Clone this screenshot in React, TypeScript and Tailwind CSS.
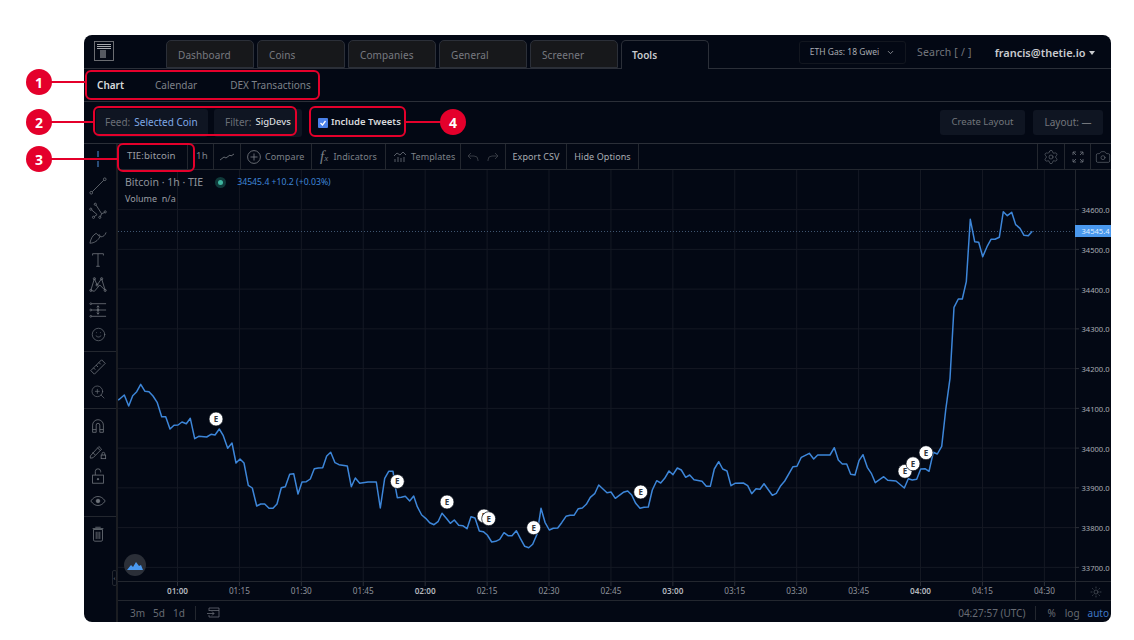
import type { ReactNode } from "react";
import { Camera, ChevronDown, Settings, Smile, Sun, ZoomIn } from "lucide-react";

const tabs = ["Dashboard", "Coins", "Companies", "General", "Screener", "Tools"];

// traced in groups: [origin x, origin y, points at 3x]
const traced: [number, number, number[][]][] = [
  [118, 370, [[0, 90], [5, 87], [19, 75], [32, 108], [44, 77], [56, 65], [68, 43], [81, 64], [93, 65], [105, 78], [118, 98], [131, 140], [143, 140], [156, 177], [168, 166], [180, 165], [192, 156], [205, 161], [217, 145], [230, 206], [242, 199], [266, 201], [279, 193], [291, 195], [304, 177], [316, 197], [329, 235], [342, 219], [354, 279], [366, 267], [378, 279], [391, 346], [403, 354], [416, 408], [428, 402], [440, 402], [453, 415], [465, 415], [477, 402], [490, 353], [502, 350], [515, 313], [527, 311], [540, 372], [552, 336], [565, 335], [577, 327], [589, 296], [601, 294], [614, 293], [626, 258], [638, 247], [651, 278], [663, 284], [688, 288], [700, 350], [712, 324], [725, 340], [750, 336], [775, 336], [787, 414], [800, 325], [812, 304], [825, 304], [832, 350], [838, 383], [850, 382], [862, 379], [875, 393], [887, 378]]],
  [390, 440, [[82, 200], [95, 225], [107, 235], [119, 248], [132, 254], [144, 245], [156, 220], [169, 235], [181, 250], [193, 240], [206, 256], [218, 257], [231, 266], [243, 230], [255, 234], [268, 273], [280, 275], [292, 285], [305, 306], [317, 304], [329, 298], [342, 278], [354, 287], [366, 287], [379, 272], [391, 295], [404, 319], [416, 323], [428, 313], [441, 283], [453, 205], [465, 247], [478, 270], [490, 265], [503, 264], [515, 248], [528, 229], [540, 226], [552, 226], [565, 206], [577, 204], [589, 193], [601, 172], [614, 161], [626, 135], [651, 158], [663, 156], [676, 175], [700, 157], [713, 153], [725, 165], [737, 190], [750, 205], [762, 202], [775, 201], [787, 150], [800, 122], [812, 129], [824, 115], [837, 93], [849, 104], [862, 84], [874, 90], [887, 112]]],
  [680, 420, [[29, 165], [42, 179], [66, 184], [79, 199], [91, 199], [103, 147], [116, 125], [128, 147], [141, 153], [153, 197], [165, 190], [190, 189], [203, 197], [215, 221], [228, 206], [240, 208], [252, 191], [277, 226], [289, 220], [302, 197], [314, 183], [339, 140], [351, 139], [364, 112], [388, 100], [401, 117], [413, 105], [450, 105], [463, 83], [475, 120], [487, 132], [500, 132], [512, 163], [525, 165], [537, 122], [549, 104], [562, 142], [574, 160], [586, 188], [611, 170], [623, 181], [648, 183], [673, 204], [685, 176], [697, 180], [710, 178], [722, 147], [735, 146], [747, 154]]],
  [920, 190, [[28, 840], [40, 787], [52, 792], [65, 769], [77, 660], [90, 565], [102, 352], [115, 327], [127, 327], [139, 275], [151, 88], [164, 155], [176, 157], [188, 200], [201, 170], [213, 148], [225, 148], [238, 142], [250, 65], [262, 77], [275, 67], [287, 104], [300, 115], [312, 136], [325, 137], [337, 124]]],
];

const linePoints = traced
  .flatMap(([ox, oy, pts]) => pts.map(([x, y]) => `${(ox + x / 3).toFixed(1)},${(oy + y / 3).toFixed(1)}`))
  .join(" ");

const prices = ["34600.0", "34500.0", "34400.0", "34300.0", "34200.0", "34100.0", "34000.0", "33900.0", "33800.0", "33700.0"];
const times = ["01:00", "01:15", "01:30", "01:45", "02:00", "02:15", "02:30", "02:45", "03:00", "03:15", "03:30", "03:45", "04:00", "04:15", "04:30"];
const markers = [[216, 419], [397.3, 481.5], [447, 502], [484, 516], [488.7, 518.7], [533.7, 527.7], [640.7, 492], [905, 471.3], [913, 463.8], [926, 452.7]];

function Chart() {
  return (
    <svg viewBox="118 170 993 430" className="block h-[430px] w-[993px] shrink-0" fontFamily="'Noto Sans', sans-serif">
      {prices.map((_, i) => (
        <line key={i} x1="118" x2="1075" y1={209.6 + i * 39.75} y2={209.6 + i * 39.75} stroke="#151924" />
      ))}
      {times.map((_, i) => (
        <line key={i} x1={177.5 + i * 61.92} x2={177.5 + i * 61.92} y1="170" y2="582" stroke="#151924" />
      ))}
      <line x1="118" x2="1075" y1="231.5" y2="231.5" stroke="#3f5570" strokeDasharray="1 2" />
      <polyline points={linePoints} fill="none" stroke="#3d86d9" strokeWidth="1.5" strokeLinejoin="round" />
      {markers.map(([x, y], i) => (
        <g key={i}>
          <circle cx={x} cy={y} r="7" fill="#ffffff" stroke="#030814" strokeWidth="0.7" />
          <text x={x} y={y + 2.8} textAnchor="middle" fontSize="8" fontWeight="700" fill="#30343c">E</text>
        </g>
      ))}
      <line x1="1075.5" x2="1075.5" y1="170" y2="600" stroke="#23272f" />
      <line x1="118" x2="1111" y1="581.5" y2="581.5" stroke="#23272f" />
      {prices.map((p, i) => (
        <g key={p}>
          <line x1="1075" x2="1079" y1={209.6 + i * 39.75} y2={209.6 + i * 39.75} stroke="#2b2f38" />
          <text x="1081.5" y={213.2 + i * 39.75} fontSize="7.6" fill="#a7abb2">{p}</text>
        </g>
      ))}
      <rect x="1075" y="225" width="36" height="12" fill="#4a98ee" />
      <text x="1081.5" y="234" fontSize="7.6" fill="#dcecff">34545.4</text>
      {times.map((t, i) => (
        <g key={t}>
          <line x1={177.5 + i * 61.92} x2={177.5 + i * 61.92} y1="582" y2="586" stroke="#2b2f38" />
          <text
            x={177.5 + i * 61.92}
            y="594"
            textAnchor="middle"
            fontSize="8.2"
            fontWeight={t.endsWith(":00") ? 600 : 400}
            fill={t.endsWith(":00") ? "#b3b6bc" : "#8f939b"}
          >
            {t}
          </text>
        </g>
      ))}
    </svg>
  );
}

function Logo() {
  return (
    <svg viewBox="0 0 20 20" className="h-5 w-5" fill="none">
      <rect x="0.5" y="0.5" width="19" height="19" stroke="#77797d" strokeWidth="0.9" />
      <path d="M3 3.500h14M3 5.500h14M3 7.500h14" stroke="#a8aaae" strokeWidth="1.1" />
      <path d="M6 10h6M6 12h6M6 14h6M6 16h6" stroke="#a8aaae" strokeWidth="1" />
    </svg>
  );
}

function RailIcon({ children }: { children: ReactNode }) {
  return (
    <svg viewBox="0 0 20 20" className="h-[18px] w-[18px]" fill="none" stroke="#6f747c" strokeWidth="0.9">
      {children}
    </svg>
  );
}

function RailSlot({ className, children }: { className: string; children: ReactNode }) {
  return <div className={`flex items-center justify-center ${className}`}>{children}</div>;
}

function LeftRail() {
  return (
    <div className="flex w-[34px] shrink-0 flex-col border-r-2 border-[#1b1d22]">
      <div className="flex flex-col border-b border-[#23272f] pr-[4px] pb-[5px]">
        <RailSlot className="h-[29px]">
          <svg viewBox="0 0 20 20" className="h-5 w-5" fill="none" stroke="#4f8fdd" strokeWidth="1"><path d="M10 2v6M10 12v6" /></svg>
        </RailSlot>
        <RailSlot className="h-[25px]">
          <RailIcon><circle cx="2.500" cy="17.500" r="1.500" /><circle cx="17.500" cy="2.500" r="1.500" /><path d="M3.600 16.400 16.400 3.600" /></RailIcon>
        </RailSlot>
        <RailSlot className="h-[25px]">
          <RailIcon><circle cx="7" cy="2.500" r="1.200" /><circle cx="2" cy="8" r="1.200" /><circle cx="5" cy="17" r="1.200" /><circle cx="12" cy="17" r="1.200" /><circle cx="18" cy="11" r="1.200" /><path d="M7.800 3.400 14 13l-1.200 3M2.900 8.800 9 14l-3.200 2.200M14 13l3.200-1.200" /></RailIcon>
        </RailSlot>
        <RailSlot className="h-[25px]">
          <RailIcon><path d="M1 18c1-5 3-9 7-11l4 4c-2 4-6 7-11 7zM11 8l2 3c3 0 5-2 6-5" /></RailIcon>
        </RailSlot>
        <RailSlot className="h-[24px]">
          <RailIcon><path d="M4 3h12M10 3v14M8 17h4M4 3v2M16 3v2" /></RailIcon>
        </RailSlot>
        <RailSlot className="h-[25px]">
          <RailIcon><path d="M6 3l3 7 5-7 4 13-6-6-6 7-4-1 4-13z" /><circle cx="6" cy="3" r="1.200" /><circle cx="14" cy="3" r="1.200" /><circle cx="18" cy="16" r="1.200" /><circle cx="2" cy="16" r="1.200" /><circle cx="9" cy="10" r="1.200" /></RailIcon>
        </RailSlot>
        <RailSlot className="h-[25px]">
          <RailIcon><path d="M3 3h16M3 10h16M3 17h16M10 5v10M8.500 7 10 5.500 11.500 7M8.500 13l1.500 1.500 1.500-1.500" /><circle cx="2" cy="3" r="1" /><circle cx="2" cy="10" r="1" /><circle cx="2" cy="17" r="1" /><circle cx="10" cy="10" r="1" /></RailIcon>
        </RailSlot>
        <RailSlot className="h-[24px]">
          <Smile size={15} strokeWidth={1.1} color="#6f747c" />
        </RailSlot>
      </div>
      <div className="flex flex-col border-b border-[#23272f] pt-[2px] pr-[4px] pb-[4px]">
        <RailSlot className="h-[25px]">
          <RailIcon><path d="M2 14 14 2l4 4L6 18zM5 11l2 2M8 8l2 2M11 5l2 2" /></RailIcon>
        </RailSlot>
        <RailSlot className="h-[25px]">
          <ZoomIn size={16} strokeWidth={1} color="#6f747c" />
        </RailSlot>
      </div>
      <div className="flex flex-col border-b border-[#23272f] pt-[4px] pr-[4px] pb-[3px]">
        <RailSlot className="h-[25px]">
          <RailIcon><path d="M4 17V9a6 6 0 0 1 12 0v8h-4V9a2 2 0 0 0-4 0v8zM4 14h4M12 14h4" /></RailIcon>
        </RailSlot>
        <RailSlot className="h-[25px]">
          <RailIcon><path d="M1.500 15.500 11 5l3 3-9.500 9.500-3 .5zM4 11.500l3 3M9.500 6.500l3 3" /><rect x="13.500" y="14.500" width="5" height="4" /><path d="M14.500 14.500V13a1.500 1.500 0 0 1 3 0v1.500" /></RailIcon>
        </RailSlot>
        <RailSlot className="h-[25px]">
          <RailIcon><rect x="4" y="9" width="12" height="9" /><path d="M7 9V5a3 3 0 0 1 6 0v1" /><circle cx="10" cy="13.500" r="0.800" fill="#6f747c" /></RailIcon>
        </RailSlot>
        <RailSlot className="h-[25px]">
          <RailIcon><path d="M2 10c2.500-3.500 5-5 8-5s5.500 1.500 8 5c-2.500 3.500-5 5-8 5s-5.500-1.500-8-5z" /><circle cx="10" cy="10" r="2" fill="#6f747c" /></RailIcon>
        </RailSlot>
      </div>
      <RailSlot className="mt-[4px] h-[25px] pr-[4px]">
        <RailIcon><path d="M5 5h10v11.500a1.500 1.500 0 0 1-1.500 1.500h-7A1.500 1.500 0 0 1 5 16.500zM4 4h12M7 2.500h6M8 7.500v8M10 7.500v8M12 7.500v8" /></RailIcon>
      </RailSlot>
    </div>
  );
}

function Seg({ className, children }: { className: string; children: ReactNode }) {
  return <div className={`flex h-full items-center border-r border-[#23272f] ${className}`}>{children}</div>;
}

function ChartToolbar() {
  return (
    <div className="flex h-[26px] shrink-0 items-center border-b border-[#23272f] text-[9px] tracking-[0.1px] text-[#7d8188]">
      <Seg className="w-[70px] pl-[9px] text-[9.7px] text-[#9a9da3]">TIE:bitcoin</Seg>
      <Seg className="w-[26px] pl-[8px] text-[9.7px]">1h</Seg>
      <Seg className="w-[27px] justify-center">
        <svg viewBox="0 0 16 10" className="h-[10px] w-4" fill="none" stroke="#6f747c" strokeWidth="0.9"><path d="M1 8l4-3 2 1 4-3 1 1 3-2" /></svg>
      </Seg>
      <Seg className="w-[71px] gap-[4px] pl-[6px]">
        <svg viewBox="0 0 14 14" className="h-[14px] w-[14px]" fill="none" stroke="#7d8188" strokeWidth="0.8"><circle cx="7" cy="7" r="6.400" /><path d="M7 3.500v7M3.500 7h7" /></svg>
        Compare
      </Seg>
      <Seg className="w-[74px] gap-[5px] pl-[8px]">
        <span className="font-['Liberation_Serif',serif] text-[15px] leading-none italic">f<span className="text-[9px]">x</span></span>
        Indicators
      </Seg>
      <Seg className="w-[75px] gap-[4px] pl-[7px]">
        <svg viewBox="0 0 14 12" className="h-3 w-[14px]" fill="none" stroke="#6f747c" strokeWidth="0.8"><path d="M1 5l3-3 3 2 3-3 3 3M2 11V8M5 11V6M8 11V7M11 11V6" /></svg>
        Templates
      </Seg>
      <Seg className="w-[45px] justify-center gap-[8px]">
        <svg viewBox="0 0 12 10" className="h-[10px] w-3" fill="none" stroke="#3b3f47" strokeWidth="0.9"><path d="M4 1 1 4l3 3M1 4h6a4 4 0 0 1 4 4v1" /></svg>
        <svg viewBox="0 0 12 10" className="h-[10px] w-3" fill="none" stroke="#3b3f47" strokeWidth="0.9"><path d="M8 1l3 3-3 3M11 4H5a4 4 0 0 0-4 4v1" /></svg>
      </Seg>
      <Seg className="w-[61px] justify-center text-[#a9acb2]">Export CSV</Seg>
      <Seg className="w-[72px] justify-center text-[#a9acb2]">Hide Options</Seg>
      <div className="flex-1" />
      <div className="flex h-full w-[27px] items-center justify-center border-l border-[#23272f]">
        <Settings size={16} strokeWidth={0.9} color="#6f747c" />
      </div>
      <div className="flex h-full w-[26px] items-center justify-center border-l border-[#23272f]">
        <svg viewBox="0 0 12 12" className="h-3 w-3" fill="none" stroke="#6f747c" strokeWidth="0.8"><path d="M1 4V1h3M8 1h3v3M1 8v3h3M8 11h3V8M1 1l3 3M11 1 8 4M1 11l3-3M11 11 8 8" /></svg>
      </div>
      <div className="flex h-full w-[21px] items-center overflow-hidden border-l border-[#23272f] pl-[4px]">
        <Camera size={16} strokeWidth={0.9} color="#6f747c" className="shrink-0" />
      </div>
    </div>
  );
}

function BottomBar() {
  return (
    <div className="flex h-[22px] shrink-0 items-center border-t border-[#23272f] pt-[3px] pr-[2px] text-[10px] text-[#676b73]">
      <span className="ml-[12px]">3m</span>
      <span className="ml-[8px]">5d</span>
      <span className="ml-[8px]">1d</span>
      <div className="ml-[10px] h-[14px] border-l border-[#23272f]" />
      <svg viewBox="0 0 14 12" className="ml-[10px] h-3 w-[14px]" fill="none" stroke="#676b73" strokeWidth="0.8"><path d="M3 4V1h10v9H3V8M3 3.500h10M1 6.500h7M6 4.500l2 2-2 2" /></svg>
      <span className="ml-auto">04:27:57 (UTC)</span>
      <div className="ml-[10px] h-[14px] border-l border-[#23272f]" />
      <span className="ml-[11px]">%</span>
      <span className="ml-[9px]">log</span>
      <span className="ml-[8px] text-[#3f77c4]">auto</span>
    </div>
  );
}

function Callout({ n, x, y }: { n: number; x: string; y: string }) {
  return (
    <div className={`absolute flex h-[26px] w-[26px] items-center justify-center rounded-full bg-[#e4002b] text-[14px] font-bold text-white ${x} ${y}`}>
      {n}
    </div>
  );
}

function Annotations() {
  const box = "absolute rounded-[6px] border-2 border-[#e4002b]";
  const wire = "absolute h-[2px] bg-[#e4002b]";
  return (
    <>
      <div className={`${box} top-[70px] left-[85px] h-[30px] w-[235px]`} />
      <div className={`${box} top-[106px] left-[93px] h-[30px] w-[204px]`} />
      <div className={`${box} top-[143px] left-[117px] h-[29px] w-[78px]`} />
      <div className={`${box} top-[106px] left-[309px] h-[31px] w-[97px]`} />
      <div className={`${wire} top-[81px] left-[50px] w-[35px]`} />
      <div className={`${wire} top-[121px] left-[50px] w-[43px]`} />
      <div className={`${wire} top-[158px] left-[50px] w-[67px]`} />
      <div className={`${wire} top-[121px] left-[406px] w-[36px]`} />
      <Callout n={1} x="left-[26px]" y="top-[69px]" />
      <Callout n={2} x="left-[26px]" y="top-[109px]" />
      <Callout n={3} x="left-[26px]" y="top-[146px]" />
      <Callout n={4} x="left-[440px]" y="top-[109px]" />
    </>
  );
}

export default function App() {
  return (
    <div className="relative h-[640px] w-[1134px] overflow-hidden bg-white pt-[35px] pl-[84px] font-['Noto_Sans',sans-serif]">
      <div className="flex h-[587px] w-[1027px] flex-col overflow-hidden rounded-[8px] bg-[#030814]">
        {/* top nav */}
        <div className="flex h-[34px] shrink-0 items-end border-b border-[#2b2f38] pl-[10px]">
          <div className="mb-[7px] w-[72px]"><Logo /></div>
          <div className="-mb-px flex gap-[3px]">
            {tabs.map((t) => (
              <div
                key={t}
                className={
                  t === "Tools"
                    ? "flex h-[29px] w-[88px] items-center rounded-t-[5px] border border-b-0 border-[#2b2f38] bg-[#030814] pt-[1px] pl-[10px] text-[10px] font-semibold text-[#c9cbcf]"
                    : "flex h-[28px] w-[88px] items-center rounded-t-[5px] border border-[#2b2f38] bg-[#17181b] pt-[2px] pl-[11px] text-[10px] tracking-[0.1px] text-[#777a80]"
                }
              >
                {t}
              </div>
            ))}
          </div>
          <div className="mb-[4px] ml-[90px] flex h-[23px] w-[107px] items-center justify-center gap-[7px] rounded-[3px] border border-[#12161f] text-[8.5px] text-[#a9acb2]">
            ETH Gas: 18 Gwei
            <ChevronDown size={9} color="#a9acb2" />
          </div>
          <span className="mb-[7px] ml-[11px] text-[10.5px] tracking-[0.2px] text-[#73767c]">Search [ / ]</span>
          <span className="mb-[7px] ml-[23px] text-[11px] font-semibold text-[#c9cbcf]">francis@thetie.io</span>
          <div className="mb-[13px] ml-[3px] h-0 w-0 border-x-[3px] border-t-[4px] border-x-transparent border-t-[#c9cbcf]" />
        </div>
        {/* sub nav */}
        <div className="flex h-[33px] shrink-0 items-center border-b border-[#2b2f38] pl-[13px] text-[10px] text-[#7d8188]">
          <span className="font-semibold text-[#d8dadd]">Chart</span>
          <span className="ml-[31px]">Calendar</span>
          <span className="ml-[33px]">DEX Transactions</span>
        </div>
        {/* controls */}
        <div className="flex h-[42px] shrink-0 items-center border-b border-[#2b2f38] pl-[12px] text-[10px]">
          <div className="flex h-[28px] w-[112px] items-center rounded-[3px] bg-[#0f1522] pl-[9px] text-[#6b6f77]">
            Feed:<span className="ml-[4px] text-[#7fa9e6]">Selected Coin</span>
          </div>
          <div className="ml-[6px] flex h-[28px] w-[88px] items-center rounded-[3px] bg-[#0f1522] pl-[11px] text-[#6b6f77]">
            Filter:<span className="ml-[4px] text-[9.5px] font-medium text-[#d8dadd]">SigDevs</span>
          </div>
          <div className="ml-[16px] flex h-[10px] w-[10px] items-center justify-center rounded-[1px] bg-[#4a80e8]">
            <svg viewBox="0 0 10 10" className="h-[10px] w-[10px]" fill="none" stroke="#ffffff" strokeWidth="1.3"><path d="M2.500 5l2 2 3-4" /></svg>
          </div>
          <span className="ml-[3px] text-[9.5px] font-semibold text-[#d8dadd]">Include Tweets</span>
          <div className="ml-auto flex h-[25px] w-[85px] items-center justify-center rounded-[3px] bg-[#0f1522] text-[9.5px] text-[#73767c]">Create Layout</div>
          <div className="mr-[8px] ml-[8px] flex h-[25px] w-[70px] items-center justify-center rounded-[3px] bg-[#0f1522] text-[#73767c]">Layout: —</div>
        </div>
        {/* chart area */}
        <div className="flex min-h-0 flex-1">
          <LeftRail />
          <div className="relative flex min-w-0 flex-1 flex-col">
            <ChartToolbar />
            <Chart />
            <BottomBar />
            <div className="absolute top-[31px] left-[7px] flex items-center text-[10.5px] text-[#8f939b]">
              Bitcoin · 1h · TIE
              <span className="ml-[12px] flex h-[11px] w-[11px] items-center justify-center rounded-full bg-[#0f3a3a]">
                <span className="h-[5px] w-[5px] rounded-full bg-[#3fb5a0]" />
              </span>
              <span className="ml-[11px] text-[8.7px] text-[#3f86d8]">34545.4 +10.2 (+0.03%)</span>
            </div>
            <div className="absolute top-[48px] left-[7px] text-[9px] text-[#9a9da3]">Volume&nbsp; n/a</div>
            <div className="absolute top-[410px] left-[6px] flex h-[22px] w-[22px] items-center justify-center rounded-full bg-[#2b2f38]">
              <svg viewBox="0 0 16 10" className="h-[10px] w-4"><path d="M0 10l4-5 2 2 3-5 3 4 2-1 2 5z" fill="#4a98ee" /></svg>
            </div>
            <div className="absolute top-[426px] left-[-6px] flex h-[16px] w-[5px] items-center justify-center rounded-[2px] border border-[#23272f] bg-[#030814] text-[6px] text-[#8f939b]">‹</div>
            <Sun size={12} strokeWidth={1} color="#6f747c" className="absolute top-[442px] right-[9px]" />
          </div>
        </div>
      </div>
      <Annotations />
    </div>
  );
}
